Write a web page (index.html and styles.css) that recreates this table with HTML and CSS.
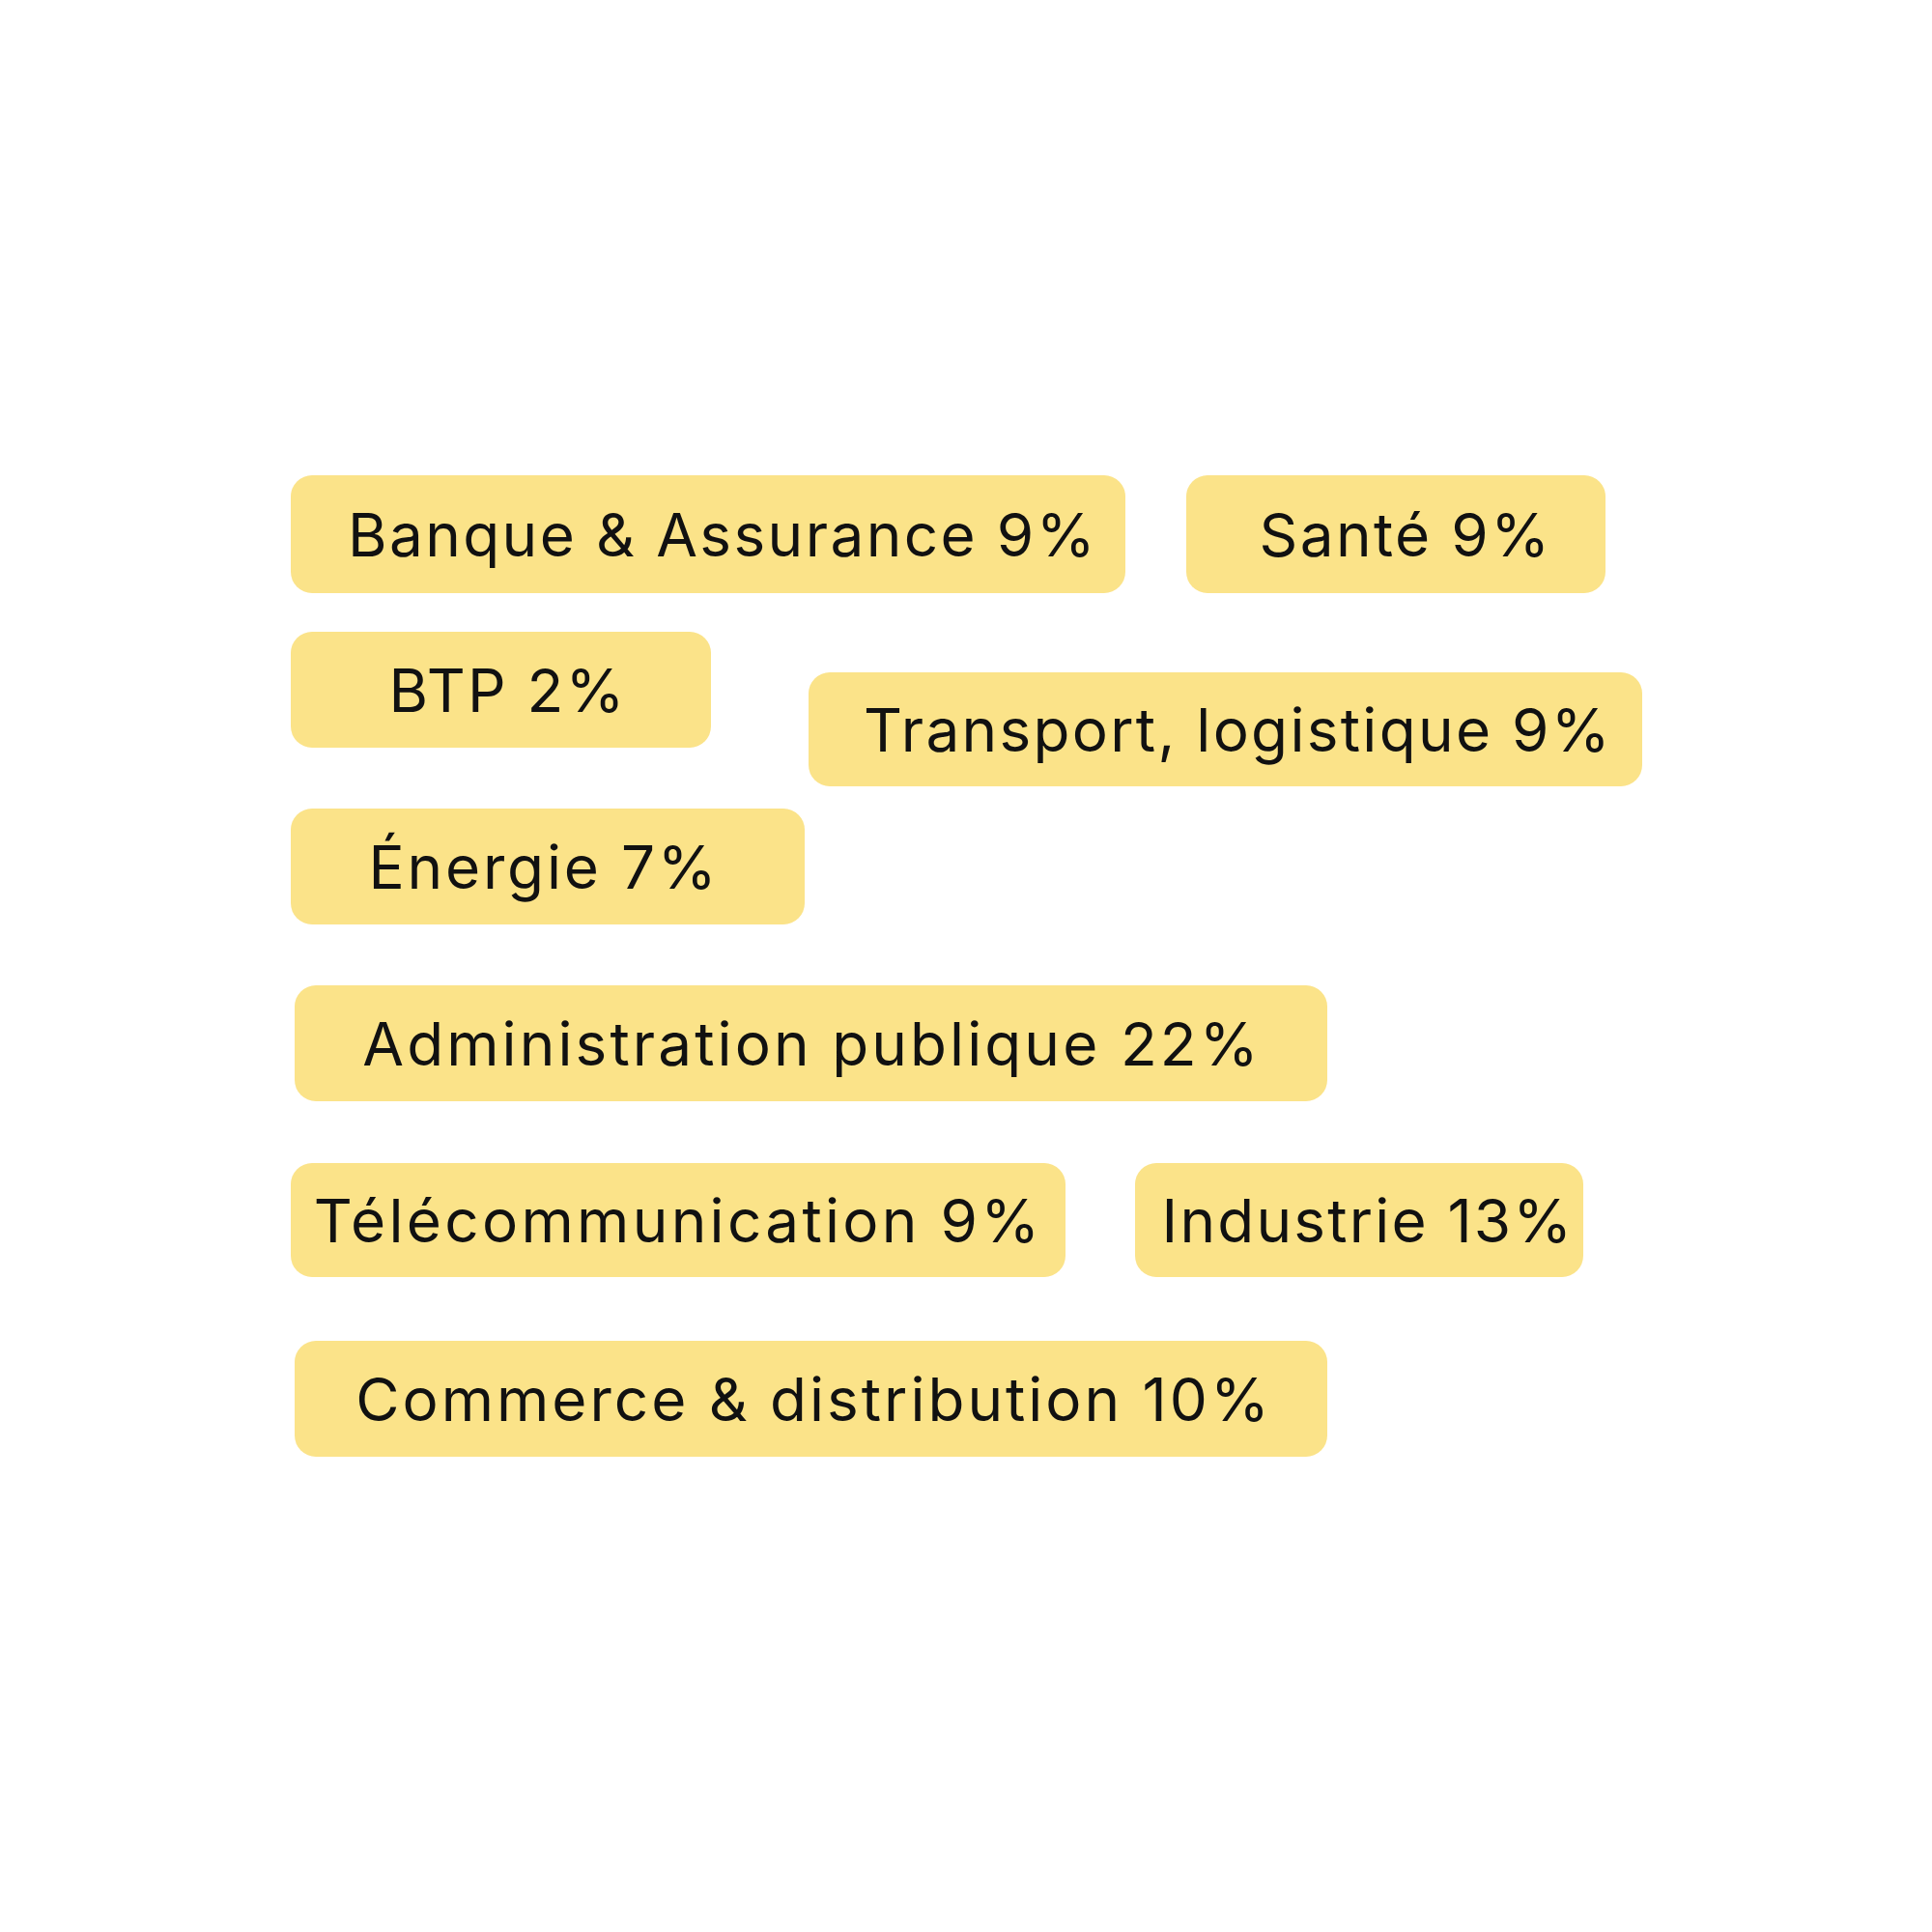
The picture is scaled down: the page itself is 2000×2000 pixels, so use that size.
FILE: index.html
```html
<!DOCTYPE html>
<html lang="fr">
<head>
<meta charset="utf-8">
<title>Secteurs</title>
<link rel="stylesheet" href="styles.css">
</head>
<body>
<main class="board">
  <div class="row row-1">
    <span class="tag w-banque">Banque &amp; Assurance 9%</span>
    <span class="tag w-sante">Santé 9%</span>
  </div>
  <div class="row row-2">
    <div class="col">
      <span class="tag w-btp">BTP 2%</span>
      <span class="tag w-energie">Énergie 7%</span>
    </div>
    <span class="tag w-transport">Transport, logistique 9%</span>
  </div>
  <div class="row row-3">
    <span class="tag w-admin">Administration publique 22%</span>
  </div>
  <div class="row row-4">
    <span class="tag w-telecom">Télécommunication 9%</span>
    <span class="tag w-industrie">Industrie 13%</span>
  </div>
  <div class="row row-5">
    <span class="tag w-commerce">Commerce &amp; distribution 10%</span>
  </div>
</main>
</body>
</html>
```
FILE: styles.css
```css
html, body {
  margin: 0;
  padding: 0;
  background: #ffffff;
}
body {
  width: 2000px;
  height: 2000px;
  font-family: Inter, "Open Sans", "DejaVu Sans", sans-serif;
  color: #111111;
}
.board {
  display: flex;
  flex-direction: column;
  padding: 492px 0 0 301px;
}
.row {
  display: flex;
  align-items: flex-start;
}
.tag {
  box-sizing: border-box;
  height: 120px;
  display: flex;
  align-items: center;
  justify-content: center;
  background: #fbe389;
  border-radius: 22px;
  font-size: 62px;
  font-weight: 400;
  white-space: nowrap;
  letter-spacing: 2.8px;
}
.row-1 { gap: 63px; }
.row-1 .tag { height: 122px; }
.row-2 { margin-top: 40px; gap: 4px; }
.col {
  display: flex;
  flex-direction: column;
  gap: 63px;
}
.w-transport { margin-top: 42px; height: 118px; }
.row-3 { margin-top: 63px; padding-left: 4px; }
.row-4 { margin-top: 64px; gap: 72px; }
.row-4 .tag { height: 118px; }
.row-5 { margin-top: 66px; padding-left: 4px; }

.w-banque { width: 864px; padding-left: 30px; letter-spacing: 2.4px; }
.w-sante { width: 434px; padding-left: 20px; letter-spacing: 2.4px; }
.w-btp { width: 435px; padding-left: 14px; letter-spacing: 2.2px; }
.w-energie { width: 532px; padding-right: 8px; }
.w-transport { width: 863px; padding-left: 26px; letter-spacing: 2.3px; }
.w-admin { width: 1069px; padding-left: 2px; letter-spacing: 3.1px; }
.w-telecom { width: 802px; letter-spacing: 3.3px; }
.w-industrie { width: 464px; padding-left: 18px; letter-spacing: 2.2px; }
.w-commerce { width: 1069px; padding-left: 6px; letter-spacing: 3px; }
```
